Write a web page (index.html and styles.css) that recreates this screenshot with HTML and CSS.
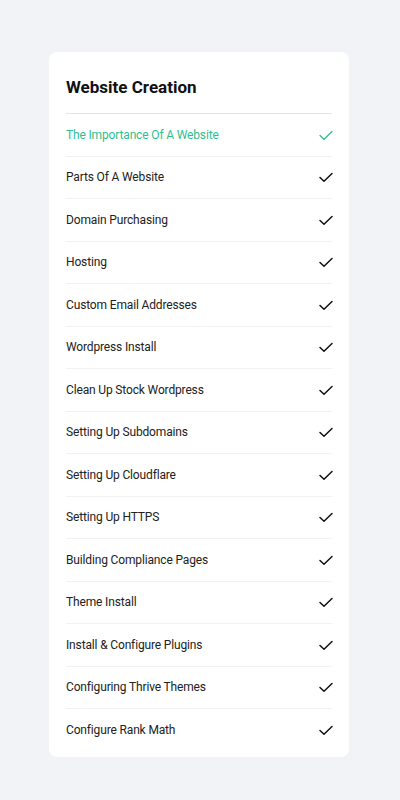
FILE: index.html
```html
<!DOCTYPE html>
<html>
<head>
<meta charset="utf-8">
<link rel="stylesheet" href="styles.css">
</head>
<body>
<div class="card">
  <h2 class="title">Website Creation</h2>
  <ul class="list">
    <li class="item active"><span>The Importance Of A Website</span><svg class="check" viewBox="0 0 16 16"><path d="M2 8.5l4 3.8L14 4.5"/></svg></li>
    <li class="item"><span>Parts Of A Website</span><svg class="check" viewBox="0 0 16 16"><path d="M2 8.5l4 3.8L14 4.5"/></svg></li>
    <li class="item"><span>Domain Purchasing</span><svg class="check" viewBox="0 0 16 16"><path d="M2 8.5l4 3.8L14 4.5"/></svg></li>
    <li class="item"><span>Hosting</span><svg class="check" viewBox="0 0 16 16"><path d="M2 8.5l4 3.8L14 4.5"/></svg></li>
    <li class="item"><span>Custom Email Addresses</span><svg class="check" viewBox="0 0 16 16"><path d="M2 8.5l4 3.8L14 4.5"/></svg></li>
    <li class="item"><span>Wordpress Install</span><svg class="check" viewBox="0 0 16 16"><path d="M2 8.5l4 3.8L14 4.5"/></svg></li>
    <li class="item"><span>Clean Up Stock Wordpress</span><svg class="check" viewBox="0 0 16 16"><path d="M2 8.5l4 3.8L14 4.5"/></svg></li>
    <li class="item"><span>Setting Up Subdomains</span><svg class="check" viewBox="0 0 16 16"><path d="M2 8.5l4 3.8L14 4.5"/></svg></li>
    <li class="item"><span>Setting Up Cloudflare</span><svg class="check" viewBox="0 0 16 16"><path d="M2 8.5l4 3.8L14 4.5"/></svg></li>
    <li class="item"><span>Setting Up HTTPS</span><svg class="check" viewBox="0 0 16 16"><path d="M2 8.5l4 3.8L14 4.5"/></svg></li>
    <li class="item"><span>Building Compliance Pages</span><svg class="check" viewBox="0 0 16 16"><path d="M2 8.5l4 3.8L14 4.5"/></svg></li>
    <li class="item"><span>Theme Install</span><svg class="check" viewBox="0 0 16 16"><path d="M2 8.5l4 3.8L14 4.5"/></svg></li>
    <li class="item"><span>Install &amp; Configure Plugins</span><svg class="check" viewBox="0 0 16 16"><path d="M2 8.5l4 3.8L14 4.5"/></svg></li>
    <li class="item"><span>Configuring Thrive Themes</span><svg class="check" viewBox="0 0 16 16"><path d="M2 8.5l4 3.8L14 4.5"/></svg></li>
    <li class="item last"><span>Configure Rank Math</span><svg class="check" viewBox="0 0 16 16"><path d="M2 8.5l4 3.8L14 4.5"/></svg></li>
  </ul>
</div>
</body>
</html>
```
FILE: styles.css
```css
html, body {
  margin: 0;
  padding: 0;
  background: #f2f3f7;
  font-family: Roboto, "Liberation Sans", sans-serif;
}
body {
  padding-top: 52px;
  padding-left: 49px;
}
.card {
  width: 300px;
  box-sizing: border-box;
  background: #ffffff;
  border-radius: 8px;
  padding: 0 17px 5px 17px;
}
.title {
  margin: 0;
  height: 62px;
  box-sizing: border-box;
  padding-top: 25px;
  font-size: 17px;
  line-height: 20px;
  font-weight: 700;
  color: #111111;
  border-bottom: 1px solid #e3e4e8;
}
.list {
  list-style: none;
  margin: 0;
  padding: 0;
}
.item {
  height: 42.5px;
  box-sizing: border-box;
  display: flex;
  align-items: center;
  justify-content: space-between;
  border-bottom: 1px solid #f2f2f4;
  font-size: 12px;
  letter-spacing: -0.15px;
  color: #222222;
}
.item.last {
  border-bottom: none;
}
.item.active {
  color: #2fbf8f;
}
.check {
  width: 16px;
  height: 16px;
  margin-right: -2px;
  fill: none;
  stroke: #111111;
  stroke-width: 1.5;
  stroke-linecap: round;
  stroke-linejoin: round;
}
.item.active .check {
  stroke: #2fbf8f;
  stroke-width: 1.3;
}
```
